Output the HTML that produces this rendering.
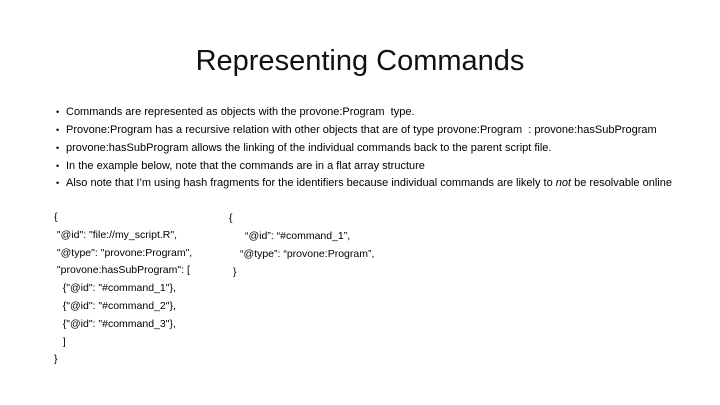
<!DOCTYPE html>
<html><head><meta charset="utf-8"><style>
body{margin:0;width:720px;height:405px;background:#fff;position:relative;overflow:hidden;font-family:"Liberation Sans",sans-serif;color:#000}
.t{position:absolute;left:0;width:720px;top:43px;text-align:center;font-size:29px;line-height:36px;color:#111}
.l{position:absolute;font-size:11px;line-height:12px;white-space:pre}
.c{position:absolute;font-size:10.5px;line-height:12px;white-space:pre}
.b{position:absolute;left:56px;font-size:9px}
</style></head><body>
<div class="t">Representing Commands</div>
<div class="b" style="top:107px">•</div><div class="l" style="left:66px;top:106px">Commands are represented as objects with the provone:Program  type.</div>
<div class="b" style="top:125px">•</div><div class="l" style="left:66px;top:124px">Provone:Program has a recursive relation with other objects that are of type provone:Program  : provone:hasSubProgram</div>
<div class="b" style="top:143px">•</div><div class="l" style="left:66px;top:142px">provone:hasSubProgram allows the linking of the individual commands back to the parent script file.</div>
<div class="b" style="top:161px">•</div><div class="l" style="left:66px;top:160px">In the example below, note that the commands are in a flat array structure</div>
<div class="b" style="top:178px">•</div><div class="l" style="left:66px;top:177px">Also note that I’m using hash fragments for the identifiers because individual commands are likely to <i>not</i> be resolvable online</div>
<div class="c" style="left:54px;top:209px;line-height:17.8px">{
 "@id": "file://my_script.R",
 "@type": "provone:Program",
 "provone:hasSubProgram": [
   {"@id": "#command_1"},
   {"@id": "#command_2"},
   {"@id": "#command_3"},
   ]
}</div>
<div class="c" style="left:229px;top:212px">{</div>
<div class="c" style="left:245px;top:230px">“@id”: “#command_1”,</div>
<div class="c" style="left:240px;top:248px">“@type”: “provone:Program”,</div>
<div class="c" style="left:233px;top:266px">}</div>
</body></html>
